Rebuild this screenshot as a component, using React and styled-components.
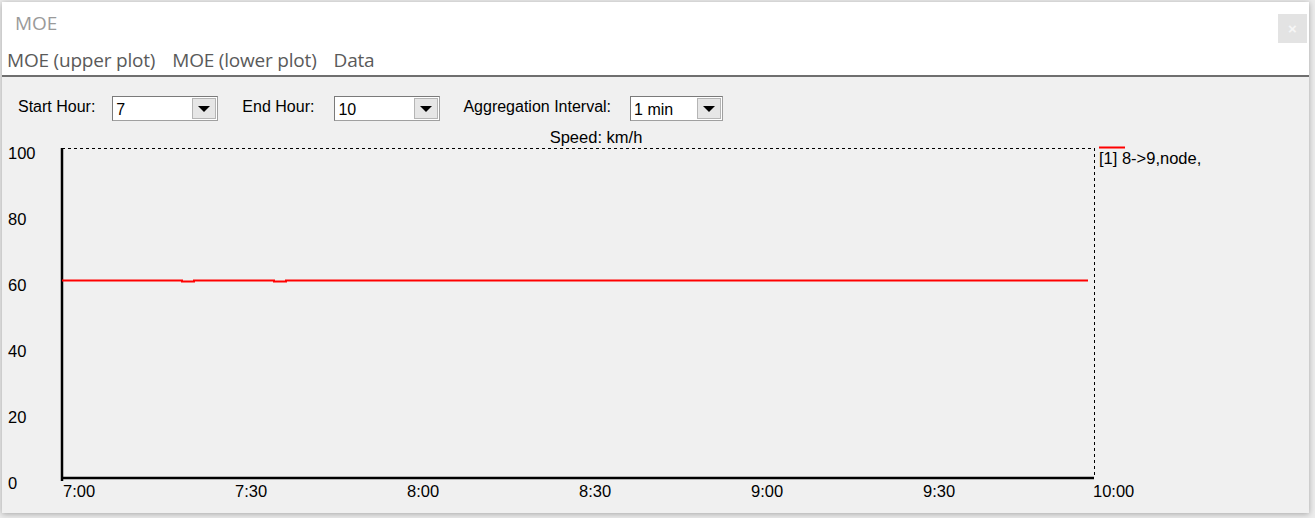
import React from "react";
import styled, { createGlobalStyle } from "styled-components";

const GlobalStyle = createGlobalStyle`
  html, body {
    margin: 0;
    padding: 0;
    background: #ececec;
    font-family: "Liberation Sans", Arial, sans-serif;
  }
  #root {
    width: 1315px;
    height: 518px;
    overflow: hidden;
  }
`;

const Window = styled.div`
  margin: 2px 0 0 2px;
  width: 1307px;
  height: 511px;
  background: #f0f0f0;
  box-shadow: 0 1px 6px rgba(0, 0, 0, 0.3);
  display: flex;
  flex-direction: column;
`;

const TitleBar = styled.div`
  height: 42px;
  background: #fff;
  display: flex;
  align-items: flex-start;
  justify-content: space-between;
`;

const Title = styled.div`
  padding: 8px 0 0 13px;
  font-family: "Open Sans", "Liberation Sans", sans-serif;
  font-size: 19px;
  color: #9a9a9a;
`;

const CloseButton = styled.div`
  width: 29px;
  height: 29px;
  margin: 12px 2px 0 0;
  background: #e3e3e3;
  color: #f6f6f6;
  font-size: 15px;
  font-weight: bold;
  display: flex;
  align-items: center;
  justify-content: center;
`;

const MenuBar = styled.div`
  height: 31px;
  background: #fff;
  border-bottom: 2px solid #6f6f6f;
  display: flex;
  align-items: center;
  gap: 17px;
  padding-left: 5px;
`;

const MenuItem = styled.div`
  font-family: "Open Sans", "Liberation Sans", sans-serif;
  font-size: 19px;
  color: #5a5a5a;
  letter-spacing: -0.2px;
`;

const Toolbar = styled.div`
  display: flex;
  align-items: center;
  padding: 19px 0 0 16px;
  height: 25px;
`;

const Label = styled.span`
  font-size: 16px;
  color: #000;
  margin-right: ${(p) => p.$gap}px;
  position: relative;
  top: -2px;
`;

const SelectBox = styled.div`
  width: ${(p) => p.$w}px;
  height: 25px;
  box-sizing: border-box;
  background: #fff;
  border: 1px solid #a0a0a0;
  border-top-color: #7a7a7a;
  border-left-color: #7a7a7a;
  display: flex;
  align-items: stretch;
  margin-right: ${(p) => p.$gap}px;
`;

const SelectValue = styled.div`
  flex: 1;
  font-size: 16px;
  padding: 4px 0 0 3px;
  color: #000;
`;

const ArrowButton = styled.div`
  width: 24px;
  margin: 1px;
  background: #e6e6e6;
  border: 1px solid #b5b5b5;
  box-sizing: border-box;
  display: flex;
  align-items: center;
  justify-content: center;
  &::after {
    content: "";
    border-left: 6px solid transparent;
    border-right: 6px solid transparent;
    border-top: 6px solid #000;
  }
`;

const ChartArea = styled.div`
  flex: 1;
  margin-top: 4px;
`;

const Select = ({ value, w, gap }) => (
  <SelectBox $w={w} $gap={gap}>
    <SelectValue>{value}</SelectValue>
    <ArrowButton />
  </SelectBox>
);

// chart coords: page x - 2, page y - 125
const L = 60;
const T = 23;
const R = 1092;
const B = 353;
const yTicks = [100, 80, 60, 40, 20, 0];
const xTicks = ["7:00", "7:30", "8:00", "8:30", "9:00", "9:30", "10:00"];

const Chart = () => {
  const yOf = (v) => B - ((B - T) * v) / 100;
  const step = (R - L) / 6;
  return (
    <svg width="1307" height="386" style={{ display: "block" }}>
      <g fontFamily="Liberation Sans, Arial, sans-serif" fontSize="16.5" fill="#000">
        <text x={594} y={18} textAnchor="middle">Speed: km/h</text>
        {yTicks.map((v) => (
          <text key={v} x={6} y={yOf(v) + 11}>{v}</text>
        ))}
        {xTicks.map((t, i) => (
          <text key={t} x={L + step * i + (i === 6 ? -1 : 1)} y={372}>{t}</text>
        ))}
        <text x={1097} y={39}>[1] 8-&gt;9,node,</text>
      </g>
      <line x1={L} y1={T + 0.5} x2={R} y2={T + 0.5} stroke="#000" strokeDasharray="3 3" />
      <line x1={R + 0.5} y1={T} x2={R + 0.5} y2={B} stroke="#000" strokeDasharray="3 3" />
      <line x1={L} y1={T} x2={L} y2={B + 3} stroke="#000" strokeWidth="2.5" />
      <line x1={L} y1={B} x2={R} y2={B} stroke="#000" strokeWidth="2.5" />
      <path
        d={`M${L} 155.5 H180 V156.5 H192 V155.5 H272 V156.5 H284 V155.5 H1086`}
        fill="none"
        stroke="#f00"
        strokeWidth="2"
      />
      <line x1={1097} y1={22.5} x2={1123} y2={22.5} stroke="#f00" strokeWidth="2" />
    </svg>
  );
};

export default function App() {
  return (
    <>
      <GlobalStyle />
      <Window>
        <TitleBar>
          <Title>MOE</Title>
          <CloseButton>×</CloseButton>
        </TitleBar>
        <MenuBar>
          <MenuItem>MOE (upper plot)</MenuItem>
          <MenuItem>MOE (lower plot)</MenuItem>
          <MenuItem>Data</MenuItem>
        </MenuBar>
        <Toolbar>
          <Label $gap={17}>Start Hour:</Label>
          <Select value="7" w={106} gap={24} />
          <Label $gap={20}>End Hour:</Label>
          <Select value="10" w={106} gap={23} />
          <Label $gap={19}>Aggregation Interval:</Label>
          <Select value="1 min" w={93} gap={0} />
        </Toolbar>
        <ChartArea>
          <Chart />
        </ChartArea>
      </Window>
    </>
  );
}
